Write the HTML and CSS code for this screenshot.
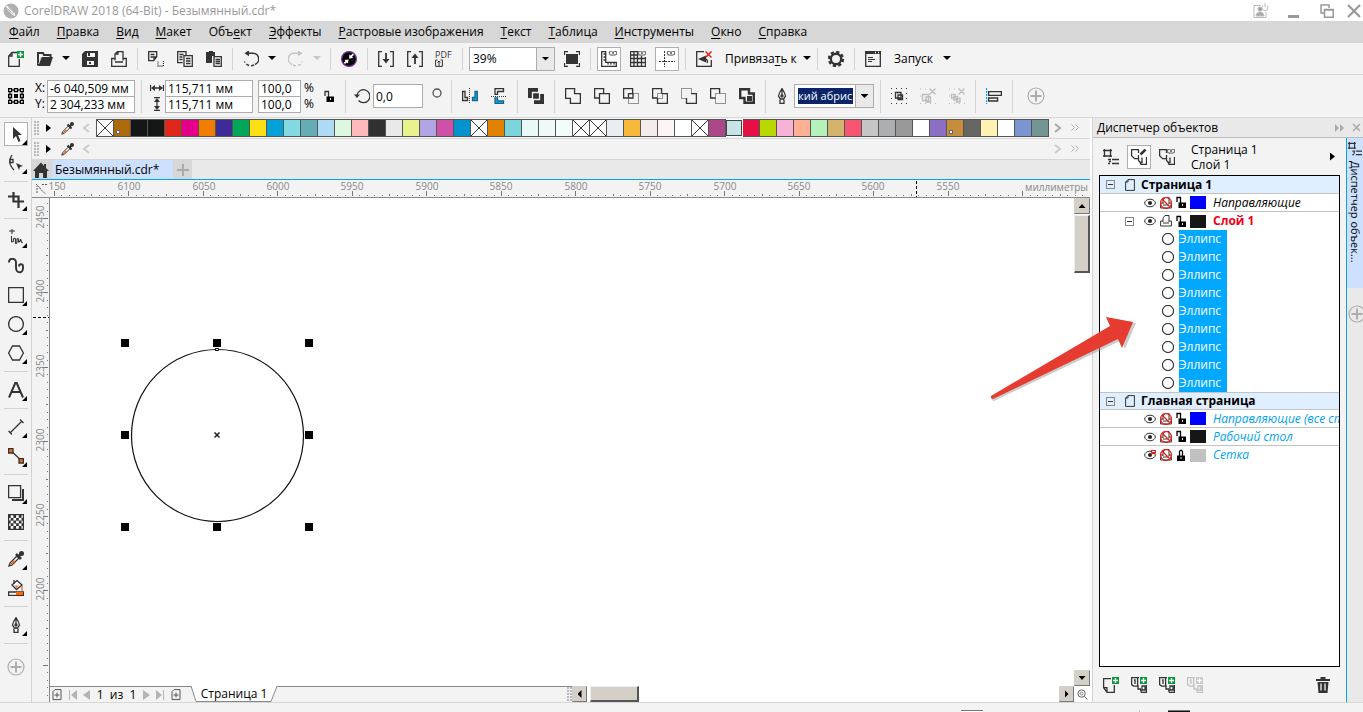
FILE: index.html
```
<!DOCTYPE html>
<html lang="ru">
<head>
<meta charset="utf-8">
<title>CorelDRAW 2018 (64-Bit) - Безымянный.cdr*</title>
<link rel="stylesheet" href="styles.css">
</head>
<body>
<svg class="defs" aria-hidden="true">
  <symbol id="new" viewBox="0 0 16 16"><path d="M9 1.500H4L.7 5v10.300h10.600V8M.7 5H4V1.500"/><path d="M9 0h7v7H9z" fill="#0a9a3c" stroke="none"/><path d="M12.500 1v5M10 3.500h5" stroke="#fff"/></symbol>
  <symbol id="open" viewBox="0 0 16 16"><path d="M1 14.500V2h5l1 2h6.500v2.500" stroke-width="2"/><path d="M1 15 4 6h12l-3 9z" fill="#333" stroke="none"/><path d="M1.500 13 4.500 6" stroke="#f3f3f3" stroke-width=".8"/></symbol>
  <symbol id="save" viewBox="0 0 16 16"><path d="M0 3 3 0h13v16H0z" fill="#333" stroke="none"/><path d="M5 2h8v4H5zM5 10h7v4H5z" fill="#f3f3f3" stroke="none"/><path d="M6 2h2v3H6zM7 11h2v2H7z" fill="#333" stroke="none"/></symbol>
  <symbol id="print" viewBox="0 0 16 16"><path d="M4 9.500V3l2.500-2.500H12v9M4 3h3V.5M4 7.500H.7v7.800h14.600V7.500H12M4 11h8"/></symbol>
  <symbol id="cut" viewBox="0 0 16 16"><path d="M.7.700h8v5l-3 4h-5zM2.500 3.500h4M2.500 6h3M6 9V6h3"/><path d="M10 10.500V15h5.500V9" stroke-dasharray="1 1"/></symbol>
  <symbol id="copy" viewBox="0 0 16 16"><path d="M9 4V.7H.7v11h5M2.500 3.500h4M2.500 6h3M2.500 8.500h3M7 4.700h8.300v10.600H7zM9 7.500h4.500M9 10h4.500M9 12.500h4.500"/></symbol>
  <symbol id="paste" viewBox="0 0 16 16"><path d="M0 1h3V0h4v1h2v4H6v7H0z" fill="#333" stroke="none"/><path d="M8 5.700h7.300v9.600H8zM9.500 8.500H14M9.500 10.500H14M9.500 12.500H14"/></symbol>
  <symbol id="undo" viewBox="0 0 16 16"><path d="M5 2.200h4.500a5.800 5.800 0 0 1 2.500 11.200" stroke-width="1.600"/><path d="M11 14a7 7 0 0 1-9.500-3.500" stroke-width="1.600" stroke-dasharray="3 2"/><path d="m1.500 2.200 4.500-3v6z" fill="#333" stroke="none"/></symbol>
  <symbol id="redo" viewBox="0 0 16 16"><path d="M11 2.200H6.500A5.800 5.800 0 0 0 4 13.400" stroke="#c4c4c4" stroke-width="1.600"/><path d="M5 14a7 7 0 0 0 9.500-3.500" stroke="#c4c4c4" stroke-width="1.600" stroke-dasharray="3 2"/><path d="m14.500 2.200-4.500-3v6z" fill="#c4c4c4" stroke="none"/></symbol>
  <symbol id="search" viewBox="0 0 16 16"><circle cx="8" cy="8" r="7.400" fill="#060606" stroke="#7c2da0" stroke-width="1.200"/><path d="m3.500 9 4-.5-.5 4-1.200-1L4 13l-1.200-1.200L4.500 10zM8.500 3.500l1.200 1 2-2L13 3.800l-2 2 1.200 1.200-4.200.5z" fill="#fff" stroke="none"/></symbol>
  <symbol id="import" viewBox="0 0 16 16"><path d="M4 .700H.7v14.600H4M12 .700h3.300v14.600H12"/><path d="M8 2v8" stroke-width="1.800"/><path d="m4.500 8 3.500 4.500L11.500 8z" fill="#333" stroke="none"/></symbol>
  <symbol id="export" viewBox="0 0 16 16"><path d="M4 .700H.7v14.600H4M12 .700h3.300v14.600H12"/><path d="M8 5v8" stroke-width="1.800"/><path d="m4.500 7 3.500-4.500L11.500 7z" fill="#333" stroke="none"/></symbol>
  <symbol id="pdfbox" viewBox="0 0 8 8"><path d="M2.500 1H.600v6.400h6.800V1H5.500M4 7V2M2.500 3.500 4 2l1.500 1.500" stroke-width="1"/></symbol>
  <symbol id="full" viewBox="0 0 16 16"><path d="M2 3h12v10H2z" fill="#333" stroke="none"/><path d="M.5 4V.5H4M12 .500h3.500V4M.500 12v3.500H4M12 15.500h3.500V12"/></symbol>
  <symbol id="eyes" viewBox="0 0 16 16"><ellipse cx="12" cy="2" rx="3.700" ry="2.200" stroke="#777"/><circle cx="12" cy="2" r="1" fill="#555" stroke="none"/></symbol>
  <symbol id="rulers" viewBox="0 0 16 16"><path d="M.7.700h4v10.600h10.600v4H.700zM2.500 3h2M2.500 6h2M2.500 9h2M7 11.500v2M10 11.500v2M13 11.500v2"/><use href="#eyes"/></symbol>
  <symbol id="grid" viewBox="0 0 16 16"><path d="M8 .500H.500v15h15V6M.500 4h8M.500 7.500h15M.500 11.500h15M4 .500v15M7.500.500v15M11.500 5v10.500"/><use href="#eyes"/></symbol>
  <symbol id="guides" viewBox="0 0 16 16"><path d="M5.500 0v16M0 10.500h16" stroke-width="1" stroke-dasharray="2 1"/><use href="#eyes"/></symbol>
  <symbol id="snap" viewBox="0 0 16 16"><path d="M8 .700H.7v14.600h14.600V9"/><path d="m2 8 8-3.500v7z" fill="#333" stroke="none"/><path d="M10 8a3 3 0 0 1 1 4"/><path d="m9.500.500 6 6M15.500.500l-6 6" stroke="#e2231a" stroke-width="1.500"/></symbol>
  <symbol id="gear" viewBox="0 0 16 16"><circle cx="8" cy="8" r="5.200" stroke-width="2.400"/><circle cx="8" cy="8" r="7.100" stroke-width="2.200" stroke-dasharray="3.200 2.370"/></symbol>
  <symbol id="launch" viewBox="0 0 16 16"><path d="M.7.700h14.600v14.600H.7z"/><path d="M0 0h16v3H0z" fill="#333" stroke="none"/><path d="M10 1.500h1M13 1.500h1" stroke="#fff"/><path d="M3 6.500h5M3 8.500h7M3 10.500h4" stroke-width="1"/></symbol>
  <symbol id="origin" viewBox="0 0 16 16"><path d="M2 2h12v12H2z"/><path d="M.6.600h3v3h-3zM6.500.600h3v3h-3zM12.400.600h3v3h-3zM.600 6.500h3v3h-3zM12.400 6.500h3v3h-3zM.600 12.400h3v3h-3zM6.500 12.400h3v3h-3zM12.400 12.400h3v3h-3z" fill="#f3f3f3" stroke="#000"/><path d="M6 6h4v4H6z" fill="#000" stroke="none"/></symbol>
  <symbol id="wide" viewBox="0 0 14 14"><path d="M.5 4v6M13.500 4v6M2 7h10" stroke="#333"/><path d="m1 7 4-3v6zM13 7 9 4v6z" fill="#333" stroke="none"/></symbol>
  <symbol id="unlock" viewBox="0 0 10 13"><path d="M1 6V1.500h3.500V7"/><path d="M2.500 6.500H10V12H2.500z" fill="#000" stroke="none"/><path d="M6.500 8v2" stroke="#ddd" stroke-width="1"/></symbol>
  <symbol id="lock" viewBox="0 0 10 13"><path d="M3.500 7V2.500Q5 0 6.500 2.500V7"/><path d="M1 6.500h8V12H1z" fill="#000" stroke="none"/><path d="M5 8v2" stroke="#ddd" stroke-width="1"/></symbol>
  <symbol id="rotate" viewBox="0 0 16 16"><path d="M3 7A6.500 6.500 0 1 1 4.500 12.500"/><path d="M0 6.500h6L3 10z" fill="#333" stroke="none"/></symbol>
  <symbol id="mirh" viewBox="0 0 16 16"><path d="M.6 3.500H3v6h2.500v3H.600z"/><path d="M15.400 3.500H13v6h-2.500v3h4.900z" fill="#1aa5ea" stroke="#17688e"/><path d="M7.500 0v16" stroke-width="1" stroke-dasharray="1 1"/></symbol>
  <symbol id="mirv" viewBox="0 0 16 16"><path d="M12.500.600H4v5.800h2.500V3.500h6z"/><path d="M4 9.800h2.500v3h6v2.700H4z" fill="#1aa5ea" stroke="#17688e"/><path d="M0 8.500h16" stroke-width="1" stroke-dasharray="1 1"/></symbol>
  <symbol id="order" viewBox="0 0 16 16"><path d="M0 0h10v10H0zM6 6h10v10H6z" fill="#333" stroke="none"/><path d="M4.500 4.500h7v7h-7z" fill="#333" stroke="#f3f3f3"/></symbol>
  <symbol id="weld" viewBox="0 0 16 16"><path d="M.6.600h9v5h5.800v9.800h-10v-5H.600z"/></symbol>
  <symbol id="trim" viewBox="0 0 16 16"><path d="M5.500 10H.600V.600h9v5M5.500 5.600h9.900v9.800H5.500z"/></symbol>
  <symbol id="intersect" viewBox="0 0 16 16"><path d="M5.500 10H.600V.600h9v5M5.500 5.600H10V10H5.500z"/><path d="M10.500 5.500h5v10h-10v-5" stroke-width="1" stroke-dasharray="1 1"/></symbol>
  <symbol id="simplify" viewBox="0 0 16 16"><path d="M5.500 10H.600V.600h9v5M10 5.600h5.400v9.800H5.500V10"/><path d="M5.500 5.500h5v5h-5z" stroke-width="1" stroke-dasharray="1 1"/></symbol>
  <symbol id="fmb" viewBox="0 0 16 16"><path d="M5.500 10.500h-5V.500h10v5" stroke-width="1" stroke-dasharray="1 1"/><path d="M10 5.600h5.400v9.800H5.500V10"/></symbol>
  <symbol id="bmf" viewBox="0 0 16 16"><path d="M5.500 10H.600V.600h9v5"/><path d="M5.500 5.500h10v10h-10z" stroke-width="1" stroke-dasharray="1 1"/></symbol>
  <symbol id="boundary" viewBox="0 0 16 16"><path d="M1.200 1.200H10v4.300h4.800v9.300H5.500V10H1.200z" stroke-width="2.400"/><path d="M8 8h5v5H8z" fill="#333" stroke="none"/></symbol>
  <symbol id="pen" viewBox="0 0 16 16"><path d="M8 .500Q5 5 4.500 8L6.500 11h3l2-3Q11 5 8 .500zM8 1v6M6 11.500v4h4v-4"/><circle cx="8" cy="8" r="1"/></symbol>
  <symbol id="group" viewBox="0 0 16 16"><path d="M0 .500h16M0 15.500h16M.500 5v6M15.500 5v6" stroke-width="1" stroke-dasharray="1 4"/><path d="M4.500 4.500H10V10H4.500zM7 7h4.500v4.500H7z"/></symbol>
  <symbol id="ungroup" viewBox="0 0 16 16"><g stroke="#bcbcbc"><path d="M0 1h8M0 8h2M0 15.500h16" stroke-width="1" stroke-dasharray="1 4"/><path d="M2.500 6.500h6v6h-6zM6 9h4.500v5H6zM9.500.500l6 6M15.500.500l-6 6"/></g></symbol>
  <symbol id="ungroupall" viewBox="0 0 16 16"><g stroke="#bcbcbc"><path d="M0 1h8M0 8h2M0 15.500h16" stroke-width="1" stroke-dasharray="1 4"/><path d="M2.500 6.500H6V10H2.500zM5 8.500h3.500V12H5zM7.500 10.500H11V14H7.500zM9.500.500l6 6M15.500.500l-6 6"/></g></symbol>
  <symbol id="align" viewBox="0 0 16 16"><path d="M.5 0v16" stroke="#00a2ff" stroke-dasharray="2 1"/><path d="M2.600 3.600h12.800v3.800H2.600zM2.600 10h9v3h-9z"/></symbol>
  <symbol id="plus" viewBox="0 0 18 18"><circle cx="9" cy="9" r="8" stroke="#adadad" stroke-width="1.200"/><path d="M9 3.500v11M3.500 9h11" stroke="#adadad" stroke-width="2"/></symbol>
  <symbol id="t-pick" viewBox="0 0 16 16"><path d="M5 1v12l3-3 2.500 6 2-1L10 9h4z" fill="#333" stroke="none"/></symbol>
  <symbol id="t-shape" viewBox="0 0 16 16"><path d="M4 0Q0 6 3 11 4 13 6 15"/><path d="M2 4.500h3v3H2z" fill="#fff"/><path d="m8 8 7 3-3 1-1 3z" fill="#333" stroke="none"/></symbol>
  <symbol id="t-crop" viewBox="0 0 16 16"><path d="M5.500 0v9.500H16M0 4.500h10.500V16" stroke-width="2.200"/></symbol>
  <symbol id="t-free" viewBox="0 0 16 16"><path d="M4-1v6M1 2h6M3.500 7v5q0 2 2 0v-2q2-2 2 1v3q1 1 1.500-1v-3q1.500-1 1.500 1v2q2 0 2-3l1 3 1 1" stroke-width="1.100"/></symbol>
  <symbol id="t-art" viewBox="0 0 16 16"><path d="M1 4.500c0-5 7-5 7 0v5c0 7 7 5.500 7 1V8.500c0-3-4-3-4 0" stroke-width="1.900"/></symbol>
  <symbol id="t-rect" viewBox="0 0 16 16"><path d="M.600.600h14.800v14.800H.600z"/></symbol>
  <symbol id="t-ell" viewBox="0 0 16 16"><circle cx="8" cy="8" r="7.400"/></symbol>
  <symbol id="t-poly" viewBox="0 0 16 16"><path d="M4.500 1h7L15.400 8l-3.900 7h-7L.600 8z"/></symbol>
  <symbol id="t-text" viewBox="0 0 16 16"><path d="M1 15.500 7.500.500h1L15 15.500M3.500 10h9" stroke-width="2"/></symbol>
  <symbol id="t-dim" viewBox="0 0 16 16"><path d="m2 14 12-12M.500 12l3.500 3.500M12 .500 15.500 4"/></symbol>
  <symbol id="t-conn" viewBox="0 0 16 16"><path d="m2 2 12 11"/><path d="M.6.600H5V5H.600zM11 10.600h4.400V15H11z" fill="#ff6a00"/></symbol>
  <symbol id="t-shadow" viewBox="0 0 16 16"><path d="M.600.600h12v12H.600z"/><path d="M4 15h11V4" stroke-width="2"/></symbol>
  <symbol id="t-trans" viewBox="0 0 16 16"><path d="M.600.600h14.800v14.800H.600z" fill="#fff"/><path d="M0 2.500h16M0 8h16M0 13.500h16" stroke-width="2.800" stroke-dasharray="2.700 2.700"/><path d="M2.700 5.300H16M2.700 10.700H16" stroke-width="2.700" stroke-dasharray="2.700 2.700"/></symbol>
  <symbol id="t-drop" viewBox="0 0 16 16"><path d="m1 15 1-3 7-7 2 2-7 7z" fill="#fff"/><path d="m2 14 1-2 3-3 1.500 1.500-3.500 3z" fill="#f36c21" stroke="none"/><path d="m8 3 5 5M10.500 5.500 14 2" stroke-width="2.500"/><circle cx="13.500" cy="2.500" r="2.500" fill="#333" stroke="none"/></symbol>
  <symbol id="t-fill" viewBox="0 0 16 16"><path d="m4 5 5-4.500L14 5 8.500 9.500z" fill="#fff"/><path d="M6.500 5.500h4.500L8.500 8z" fill="#f36c21" stroke="none"/><path d="M6 0v4"/><path d="M14 6v5" stroke="#f36c21"/><path d="M.600 12h14.800v3.400H.600z" fill="#fff"/><path d="M8 12h7v3H8z" fill="#ff6a00" stroke="none"/></symbol>
  <symbol id="home" viewBox="0 0 16 16"><path d="M8 .5 0 9h2v7h4v-5h4v5h4V9h2l-3-3V2h-2v2z" fill="#333" stroke="none"/></symbol>
  <symbol id="objm" viewBox="0 0 16 16"><path d="M1.500 0v8M7.500 0v8M0 1.500h9M0 7h9M9 10.500h7M9 14.500h7M5 10.500h3M6 12.500h2M5 14.500h2"/></symbol>
  <symbol id="layer" viewBox="0 0 16 16"><path d="M7.500 4V.600H.600v6l3 3h3.900V6M7.500 9.500v2l2 2h1.500V8.500M11.500 15.400h4V8M9 13.500l1 1.900h2"/></symbol>
  <symbol id="pencil" viewBox="0 0 16 16"><use href="#layer"/><path d="m9.500 5.500 5-5" stroke-width="2.500"/></symbol>
  <symbol id="layereye" viewBox="0 0 16 16"><use href="#layer"/><use href="#eyes"/></symbol>
  <symbol id="eye" viewBox="0 0 12 10"><ellipse cx="6" cy="5" rx="5.300" ry="3.800"/><circle cx="6" cy="5" r="2" fill="#222" stroke="none"/></symbol>
  <symbol id="eyeoff" viewBox="0 0 12 10"><ellipse cx="6" cy="5" rx="5.300" ry="3.800"/><circle cx="6" cy="5" r="2" fill="#222" stroke="none"/><circle cx="9.500" cy="1.500" r="2.700" fill="#e11" stroke="none"/><path d="M8 1.500h3" stroke="#fff"/></symbol>
  <symbol id="tprint" viewBox="0 0 12 12"><path d="M3 7V3l2-2.500h4V7M3 6H.600v5h10.800V6H9M3 8h6"/></symbol>
  <symbol id="noprint" viewBox="0 0 12 12"><use href="#tprint"/><circle cx="6" cy="6" r="5.500" stroke="#e2231a" stroke-width="1.300"/><path d="m2 2 8 8" stroke="#e2231a" stroke-width="1.300"/></symbol>
  <symbol id="page" viewBox="0 0 12 12"><path d="M4 .600h6.400v10.800H1.600V3zM1.600 3H4V.600"/></symbol>
  <symbol id="newlayer" viewBox="0 0 16 16"><path d="M8 1.600H.600v9l3.500 4.800h7.200V8M.600 10.600H4v4"/><path d="M9 0h7v7H9z" fill="#0a9a3c" stroke="none"/><path d="M12.500 1v5M10 3.500h5" stroke="#fff"/></symbol>
  <symbol id="master" viewBox="0 0 16 16"><path d="M8 .600H.600v7l2 1.500h4V.600M3 3h1v4M7 8v4h3M15.400 8v7.400h-5l-1-3M11 9h3v4h-3z"/><path d="M9 0h7v7H9z" fill="#0a9a3c" stroke="none"/><path d="M12.500 1v5M10 3.500h5" stroke="#fff"/></symbol>
  <symbol id="masteroff" viewBox="0 0 16 16"><g stroke="#c2c2c2"><path d="M8 .600H.600v7l2 1.500h4V.600M3 3h1v4M7 8v4h3M15.400 8v7.400h-5l-1-3M11 9h3v4h-3z"/><path d="M9 0h7v7H9z" fill="#c8c8c8" stroke="none"/><path d="M12.500 1v5M10 3.500h5" stroke="#fff"/></g></symbol>
  <symbol id="trash" viewBox="0 0 16 16"><path d="M1 2h4.500V0h5v2H15v2H1zM2.500 5h11l-1 11h-9z" fill="#333" stroke="none"/><path d="M6 6.500v7M10 6.500v7" stroke="#f3f3f3"/></symbol>
  <symbol id="addpage" viewBox="0 0 10 12"><path d="M3 .600h6v10H1v-8zM5 3.500v5M2.500 6h5" stroke="#555"/></symbol>
  <symbol id="zoomi" viewBox="0 0 12 12"><circle cx="5" cy="5" r="4" stroke="#555"/><circle cx="5" cy="5" r="1.500" stroke="#777"/><path d="m8 8 3.500 3.500" stroke="#555"/></symbol>
</svg>

<header class="titlebar">
  <svg class="logo" viewBox="0 0 16 16"><circle cx="8" cy="8" r="7.500" fill="#b0b0b0"/><path d="M3 2.500 6 4l6 6.500v2.500L9.500 12 4 6z" fill="#fff"/><path d="m4 5 6.500 6.500M5.500 4l6 6.500" stroke="#aaa" fill="none" stroke-width=".8"/></svg>
  <h1>CorelDRAW 2018 (64-Bit) - Безымянный.cdr*</h1>
  <div class="winbtns">
    <button aria-label="Войти"><svg width="17" height="16" viewBox="0 0 17 16" fill="none" stroke="#bbb"><path d="M9 2.500H2v12h12V9"/><circle cx="8" cy="6" r="2" fill="#999"/><path d="M4 13q0-3 3-4h2q3 1 3 4z" fill="#aaa"/><path d="M11 2.500a3 3 0 1 0 4 0M13 0v4"/></svg></button>
    <button aria-label="Свернуть"><svg width="12" height="16"><path d="M0 12h11v3H0z" fill="#999"/></svg></button>
    <button aria-label="Восстановить"><svg width="14" height="14" viewBox="0 0 14 14" fill="none" stroke="#999" stroke-width="1.500"><path d="M4 9H1V1h8v3M4.500 5.500h8.700v7.700H4.500zM4.500 6h9"/></svg></button>
    <button aria-label="Закрыть"><svg width="14" height="14" viewBox="0 0 14 14" stroke="#999" stroke-width="2.200"><path d="m1 1 12 12M13 1 1 13"/></svg></button>
  </div>
</header>

<nav class="menu">
  <a href="#"><u>Ф</u>айл</a><a href="#"><u>П</u>равка</a><a href="#"><u>В</u>ид</a><a href="#"><u>М</u>акет</a><a href="#">Объ<u>е</u>кт</a><a href="#"><u>Э</u>ффекты</a><a href="#"><u>Р</u>астровые изображения</a><a href="#"><u>Т</u>екст</a><a href="#"><u>Т</u>аблица</a><a href="#"><u>И</u>нструменты</a><a href="#"><u>О</u>кно</a><a href="#"><u>С</u>правка</a>
</nav>

<div class="bar standard" role="toolbar">
  <button class="tool" aria-label="Создать"><svg class="i"><use href="#new"/></svg></button>
  <button class="tool" aria-label="Открыть"><svg class="i"><use href="#open"/></svg></button>
  <button class="caret" aria-label="Недавние"></button>
  <button class="tool" aria-label="Сохранить"><svg class="i"><use href="#save"/></svg></button>
  <button class="tool" aria-label="Печать"><svg class="i"><use href="#print"/></svg></button>
  <i class="sep"></i>
  <button class="tool" aria-label="Вырезать"><svg class="i"><use href="#cut"/></svg></button>
  <button class="tool" aria-label="Копировать"><svg class="i"><use href="#copy"/></svg></button>
  <button class="tool" aria-label="Вставить"><svg class="i"><use href="#paste"/></svg></button>
  <i class="sep"></i>
  <button class="tool" aria-label="Отменить"><svg class="i"><use href="#undo"/></svg></button>
  <button class="caret" aria-label="Список отмен"></button>
  <button class="tool" aria-label="Повторить"><svg class="i"><use href="#redo"/></svg></button>
  <button class="caret off" aria-label="Список повторов"></button>
  <i class="sep"></i>
  <button class="tool" aria-label="Поиск содержимого"><svg class="i"><use href="#search"/></svg></button>
  <i class="sep"></i>
  <button class="tool" aria-label="Импорт"><svg class="i"><use href="#import"/></svg></button>
  <button class="tool" aria-label="Экспорт"><svg class="i"><use href="#export"/></svg></button>
  <button class="tool pdf"><span>PDF</span><svg class="i"><use href="#pdfbox"/></svg></button>
  <i class="sep"></i>
  <div class="combo zoom"><input aria-label="Масштаб" value="39%"><button aria-label="Выбор масштаба"></button></div>
  <button class="tool" aria-label="Во весь экран"><svg class="i"><use href="#full"/></svg></button>
  <i class="sep"></i>
  <button class="tool on" aria-label="Линейки"><svg class="i"><use href="#rulers"/></svg></button>
  <button class="tool" aria-label="Сетка"><svg class="i"><use href="#grid"/></svg></button>
  <button class="tool on" aria-label="Направляющие"><svg class="i"><use href="#guides"/></svg></button>
  <i class="sep"></i>
  <button class="tool" aria-label="Отключить привязку"><svg class="i"><use href="#snap"/></svg></button>
  <button class="textbtn"><span>Привяза<u>т</u>ь к</span><i class="caret"></i></button>
  <i class="sep"></i>
  <button class="tool" aria-label="Параметры"><svg class="i"><use href="#gear"/></svg></button>
  <i class="sep"></i>
  <button class="tool" aria-label="Приложения"><svg class="i"><use href="#launch"/></svg></button>
  <button class="textbtn short"><span>Запуск</span><i class="caret"></i></button>
</div>

<div class="bar property" role="toolbar">
  <button class="tool" aria-label="Исходная точка"><svg class="i"><use href="#origin"/></svg></button>
  <div class="pair">
    <label for="px">X:</label><input id="px" value="-6 040,509 мм">
    <label for="py">Y:</label><input id="py" value="2 304,233 мм">
  </div>
  <i class="sep"></i>
  <div class="pair size">
    <label for="pw" aria-label="Ширина"><svg class="mini"><use href="#wide"/></svg></label><input id="pw" value="115,711 мм">
    <label for="ph" aria-label="Высота"><svg class="mini turn"><use href="#wide"/></svg></label><input id="ph" value="115,711 мм">
  </div>
  <div class="pair scale">
    <input id="sx" value="100,0"><label for="sx">%</label>
    <input id="sy" value="100,0"><label for="sy">%</label>
  </div>
  <button class="tool lockbtn" aria-label="Сохранять пропорции"><svg class="lk"><use href="#unlock"/></svg></button>
  <i class="sep"></i>
  <div class="angle"><label for="rot" aria-label="Угол"><svg class="i"><use href="#rotate"/></svg></label><input id="rot" value="0,0"></div>
  <svg class="degree" viewBox="0 0 17 24"><circle cx="9" cy="9" r="4" fill="none" stroke="#555" stroke-width="1.300"/></svg>
  <i class="sep"></i>
  <button class="tool" aria-label="Отразить по горизонтали"><svg class="i"><use href="#mirh"/></svg></button>
  <button class="tool" aria-label="Отразить по вертикали"><svg class="i"><use href="#mirv"/></svg></button>
  <i class="sep"></i>
  <button class="tool" aria-label="Порядок"><svg class="i"><use href="#order"/></svg></button>
  <i class="sep"></i>
  <button class="tool" aria-label="Объединение"><svg class="i"><use href="#weld"/></svg></button>
  <button class="tool" aria-label="Исключение"><svg class="i"><use href="#trim"/></svg></button>
  <button class="tool" aria-label="Пересечение"><svg class="i"><use href="#intersect"/></svg></button>
  <button class="tool" aria-label="Упрощение"><svg class="i"><use href="#simplify"/></svg></button>
  <button class="tool" aria-label="Передние минус задние"><svg class="i"><use href="#fmb"/></svg></button>
  <button class="tool" aria-label="Задние минус передние"><svg class="i"><use href="#bmf"/></svg></button>
  <button class="tool" aria-label="Граница"><svg class="i"><use href="#boundary"/></svg></button>
  <i class="sep"></i>
  <div class="outline"><label for="ow" aria-label="Ширина абриса"><svg class="i"><use href="#pen"/></svg></label>
    <div class="combo"><input id="ow" class="marked" value="кий абрис"><button aria-label="Выбор абриса"></button></div></div>
  <i class="sep"></i>
  <button class="tool" aria-label="Сгруппировать"><svg class="i"><use href="#group"/></svg></button>
  <button class="tool" aria-label="Разгруппировать"><svg class="i"><use href="#ungroup"/></svg></button>
  <button class="tool" aria-label="Разгруппировать все"><svg class="i"><use href="#ungroupall"/></svg></button>
  <i class="sep"></i>
  <button class="tool" aria-label="Выровнять"><svg class="i"><use href="#align"/></svg></button>
  <i class="sep"></i>
  <button class="tool add" aria-label="Настроить"><svg class="p"><use href="#plus"/></svg></button>
</div>

<div class="work">
  <div class="toolbox" role="toolbar">
    <button class="tool on fly" aria-label="Выбор"><svg class="i"><use href="#t-pick"/></svg></button>
    <button class="tool fly" aria-label="Форма"><svg class="i"><use href="#t-shape"/></svg></button>
    <i class="sep"></i>
    <button class="tool fly" aria-label="Обрезка"><svg class="i"><use href="#t-crop"/></svg></button>
    <i class="sep"></i>
    <button class="tool fly" aria-label="Свободная форма"><svg class="i"><use href="#t-free"/></svg></button>
    <button class="tool" aria-label="Художественное оформление"><svg class="i"><use href="#t-art"/></svg></button>
    <button class="tool fly" aria-label="Прямоугольник"><svg class="i"><use href="#t-rect"/></svg></button>
    <button class="tool fly" aria-label="Эллипс"><svg class="i"><use href="#t-ell"/></svg></button>
    <button class="tool fly" aria-label="Многоугольник"><svg class="i"><use href="#t-poly"/></svg></button>
    <i class="sep"></i>
    <button class="tool fly" aria-label="Текст"><svg class="i"><use href="#t-text"/></svg></button>
    <i class="sep"></i>
    <button class="tool fly" aria-label="Размер"><svg class="i"><use href="#t-dim"/></svg></button>
    <button class="tool fly" aria-label="Соединитель"><svg class="i"><use href="#t-conn"/></svg></button>
    <i class="sep"></i>
    <button class="tool fly" aria-label="Тень"><svg class="i"><use href="#t-shadow"/></svg></button>
    <button class="tool" aria-label="Прозрачность"><svg class="i"><use href="#t-trans"/></svg></button>
    <i class="sep"></i>
    <button class="tool fly" aria-label="Пипетка"><svg class="i"><use href="#t-drop"/></svg></button>
    <button class="tool" aria-label="Заливка"><svg class="i"><use href="#t-fill"/></svg></button>
    <i class="sep"></i>
    <button class="tool fly" aria-label="Перо абриса"><svg class="i"><use href="#pen"/></svg></button>
    <i class="sep"></i>
    <button class="tool add" aria-label="Настроить"><svg class="p"><use href="#plus"/></svg></button>
  </div>

  <main class="doc">
    <div class="palette">
      <i class="grip"></i><button class="play" aria-label="Меню палитры"></button>
      <button class="drop" aria-label="Пипетка"><svg><use href="#t-drop"/></svg></button>
      <button class="chev" aria-label="Назад"><svg viewBox="0 0 8 10"><path d="M7 1 2 5l5 4"/></svg></button>
      <div class="swatches">
        <button class="none"></button><button class="mark" style="background-color:#ad6a0b"></button><button style="background:#141716"></button><button style="background:#141716"></button><button style="background:#e0271b"></button><button style="background:#e4008a"></button><button style="background:#f07d00"></button><button style="background:#3e2c96"></button><button style="background:#00a65a"></button><button style="background:#ffe014"></button><button style="background:#00a2d8"></button><button style="background:#83d9df"></button><button style="background:#63aeb6"></button><button style="background:#addbf3"></button><button style="background:#dcf8df"></button><button style="background:#ffb8bc"></button><button style="background:#303030"></button><button style="background:#e9e9e9"></button><button style="background:#eaf28b"></button><button style="background:#b0a5e2"></button><button style="background:#cf50a9"></button><button style="background:#0093cd"></button><button class="none"></button><button style="background:#e38200"></button><button style="background:#7ad6da"></button><button style="background:#e8f9f8"></button><button style="background:#eef9fb"></button><button style="background:#f2fcfa"></button><button class="none"></button><button class="none"></button><button style="background:#e9eef3"></button><button style="background:#f8b93a"></button><button style="background:#f5ebea"></button><button style="background:#fff3f3"></button><button style="background:#ffffff"></button><button class="none"></button><button style="background:#ac4789"></button><button class="picked" style="background:#c6e3e7"></button><button style="background:#e51144"></button><button style="background:#b9d800"></button><button style="background:#f6b3d5"></button><button style="background:#ffb092"></button><button style="background:#b5f2bb"></button><button style="background:#d4b46d"></button><button style="background:#f75673"></button><button style="background:#c4c5c4"></button><button style="background:#adaeb0"></button><button style="background:#999999"></button><button style="background:#ffffff"></button><button style="background:#8b6fc5"></button><button class="mark" style="background-color:#c68d3c"></button><button style="background:#666663"></button><button style="background:#fff2b4"></button><button style="background:#ffffff"></button><button style="background:#7b94d2"></button><button style="background:#739694"></button>
      </div>
      <button class="chev next dark" aria-label="Далее"><svg viewBox="0 0 8 10"><path d="m1 1 5 4-5 4"/></svg></button>
      <button class="more" aria-label="Развернуть"><svg viewBox="0 0 8 8"><path d="m.500.500 3 3-3 3M4.500.500l3 3-3 3"/></svg></button>
    </div>
    <div class="palette">
      <i class="grip"></i><button class="play" aria-label="Меню палитры"></button>
      <button class="drop" aria-label="Пипетка"><svg><use href="#t-drop"/></svg></button>
      <button class="chev" aria-label="Назад"><svg viewBox="0 0 8 10"><path d="M7 1 2 5l5 4"/></svg></button>
      <div class="fill"></div>
      <button class="chev next" aria-label="Далее"><svg viewBox="0 0 8 10"><path d="m1 1 5 4-5 4"/></svg></button>
      <button class="more" aria-label="Развернуть"><svg viewBox="0 0 8 8"><path d="m.500.500 3 3-3 3M4.500.500l3 3-3 3"/></svg></button>
    </div>
    <div class="tabs">
      <button class="home" aria-label="Начало"><svg><use href="#home"/></svg></button>
      <button class="tab">Безымянный.cdr*</button>
      <button class="newtab" aria-label="Новая вкладка"><svg viewBox="0 0 12 12"><path d="M6 0v12M0 6h12"/></svg></button>
    </div>
    <div class="rulerx">
      <svg>
        <defs>
          <pattern id="tx" x="22" y="0" width="149" height="17" patternUnits="userSpaceOnUse">
            <path d="M0 11h1v5H0zM74 11h1v5h-1zM37 14h1v2h-1zM112 14h1v2h-1zM7 15h1v1H7zM15 15h1v1h-1zM22 15h1v1h-1zM30 15h1v1h-1zM45 15h1v1h-1zM52 15h1v1h-1zM60 15h1v1h-1zM67 15h1v1h-1zM82 15h1v1h-1zM89 15h1v1h-1zM97 15h1v1h-1zM104 15h1v1h-1zM119 15h1v1h-1zM127 15h1v1h-1zM134 15h1v1h-1zM142 15h1v1h-1z" fill="#777"/>
          </pattern>
        </defs>
        <rect x="18" width="100%" height="17" fill="url(#tx)"/>
        <path d="M4 4l5 5M5 13V6M10 4.500h5M7.500 8l6 6" stroke="#555" fill="none" stroke-dasharray="2 1"/>
        <g class="nums"><text x="25" y="10">150</text><text x="97" y="10">6100</text><text x="172" y="10">6050</text><text x="246" y="10">6000</text><text x="320" y="10">5950</text><text x="395" y="10">5900</text><text x="469" y="10">5850</text><text x="544" y="10">5800</text><text x="618" y="10">5750</text><text x="693" y="10">5700</text><text x="767" y="10">5650</text><text x="841" y="10">5600</text><text x="916" y="10">5550</text></g>
        <path d="M884.500 1v16" stroke="#000" stroke-dasharray="3 2"/>
      </svg>
      <span class="unit">миллиметры</span>
    </div>
    <div class="stage">
      <svg class="rulery">
        <defs>
          <pattern id="ty" x="0" y="20" width="17" height="149" patternUnits="userSpaceOnUse">
            <path d="M11 0v1h5V0zM11 74v1h5v-1zM14 37v1h2v-1zM14 112v1h2v-1zM15 7v1h1V7zM15 15v1h1v-1zM15 22v1h1v-1zM15 30v1h1v-1zM15 45v1h1v-1zM15 52v1h1v-1zM15 60v1h1v-1zM15 67v1h1v-1zM15 82v1h1v-1zM15 89v1h1v-1zM15 97v1h1v-1zM15 104v1h1v-1zM15 119v1h1v-1zM15 127v1h1v-1zM15 134v1h1v-1zM15 142v1h1v-1z" fill="#777"/>
          </pattern>
        </defs>
        <rect width="17" height="100%" fill="url(#ty)"/>
        <g class="nums"><text transform="translate(12 19) rotate(-90)">2450</text><text transform="translate(12 93) rotate(-90)">2400</text><text transform="translate(12 168) rotate(-90)">2350</text><text transform="translate(12 242) rotate(-90)">2300</text><text transform="translate(12 317) rotate(-90)">2250</text><text transform="translate(12 391) rotate(-90)">2200</text></g>
        <path d="M1 119.500h16" stroke="#000" stroke-dasharray="3 2"/>
      </svg>
      <div class="view">
        <div class="sheetrow">
          <svg class="canvas">
            <circle cx="167.500" cy="237.500" r="86" fill="none" stroke="#111" stroke-width="1.200"/>
            <path d="M71 141h8v8h-8zM163 141h8v8h-8zM255 141h8v8h-8zM71 233h8v8h-8zM255 233h8v8h-8zM71 325h8v8h-8zM163 325h8v8h-8zM255 325h8v8h-8z"/>
            <path d="M165.500 150.500h3v2h-3z" fill="#fff" stroke="#000"/>
            <path d="m164.500 234.500 5 5M169.500 234.500l-5 5" stroke="#222" stroke-width="1.500"/>
          </svg>
          <div class="vscroll"><button class="sb up" aria-label="Вверх"></button><div class="thumb"></div><button class="sb down" aria-label="Вниз"></button></div>
        </div>
        <div class="pages">
          <div class="pagenav">
            <button aria-label="Добавить страницу"><svg class="ap"><use href="#addpage"/></svg></button>
            <button aria-label="Первая"><svg width="10" height="10"><path d="M1 0h1v10H1zM9 0v10L3 5z"/></svg></button>
            <button aria-label="Предыдущая"><svg width="8" height="10"><path d="M7 0v10L0 5z"/></svg></button>
            <span>1&nbsp; из&nbsp; 1</span>
            <button aria-label="Следующая"><svg width="8" height="10"><path d="M1 0v10l7-5z"/></svg></button>
            <button aria-label="Последняя"><svg width="10" height="10"><path d="M1 0v10l6-5zM8 0h1v10H8z"/></svg></button>
            <button aria-label="Добавить страницу"><svg class="ap"><use href="#addpage"/></svg></button>
          </div>
          <button class="pagetab"><svg viewBox="0 0 86 16"><path d="M0 0h86l-6 15.500H5z" fill="#fff"/><path d="M0 0l5 15.500h75L86 0" fill="none" stroke="#888"/></svg><span>Страница 1</span></button>
          <div class="rest"><i class="grip"></i></div>
          <div class="hscroll"><button class="sb left" aria-label="Влево"></button><div class="thumb"></div><button class="sb right" aria-label="Вправо"></button></div>
          <button class="navi" aria-label="Навигатор"><svg><use href="#zoomi"/></svg></button>
        </div>
      </div>
    </div>
  </main>

  <aside class="docker">
    <div class="dockhead"><h2>Диспетчер объектов</h2>
      <button aria-label="Свернуть"><svg width="9" height="8"><path d="M0 0v8l4-4zM5 0v8l4-4z" fill="#aaa"/></svg></button>
      <button aria-label="Закрыть"><svg width="9" height="9" stroke="#aaa" stroke-width="1.500"><path d="m1 1 7 7M8 1 1 8"/></svg></button>
    </div>
    <div class="dockbody">
      <div class="panel">
        <div class="paneltools">
          <button class="tool" aria-label="Свойства объекта"><svg class="i"><use href="#objm"/></svg></button>
          <button class="tool on" aria-label="Редактировать по слоям"><svg class="i"><use href="#pencil"/></svg></button>
          <button class="tool" aria-label="Вид диспетчера слоев"><svg class="i"><use href="#layereye"/></svg></button>
          <p>Страница 1<br>Слой 1</p>
          <button class="play" aria-label="Параметры"></button>
        </div>
        <ul class="tree">
          <li class="pg"><button class="exp" aria-label="Свернуть"></button><svg class="s"><use href="#page"/></svg>Страница 1</li>
          <li class="ly line"><svg class="e"><use href="#eye"/></svg><svg class="s"><use href="#noprint"/></svg><svg class="l"><use href="#unlock"/></svg><i class="sw blue"></i><em>Направляющие</em></li>
          <li class="ly kids"><button class="exp" aria-label="Свернуть"></button><svg class="e"><use href="#eye"/></svg><svg class="s"><use href="#tprint"/></svg><svg class="l"><use href="#unlock"/></svg><i class="sw black"></i><b>Слой 1</b></li>
          <li class="ob"><svg class="c"><use href="#t-ell"/></svg><span>Эллипс</span></li>
          <li class="ob"><svg class="c"><use href="#t-ell"/></svg><span>Эллипс</span></li>
          <li class="ob"><svg class="c"><use href="#t-ell"/></svg><span>Эллипс</span></li>
          <li class="ob"><svg class="c"><use href="#t-ell"/></svg><span>Эллипс</span></li>
          <li class="ob"><svg class="c"><use href="#t-ell"/></svg><span>Эллипс</span></li>
          <li class="ob"><svg class="c"><use href="#t-ell"/></svg><span>Эллипс</span></li>
          <li class="ob"><svg class="c"><use href="#t-ell"/></svg><span>Эллипс</span></li>
          <li class="ob"><svg class="c"><use href="#t-ell"/></svg><span>Эллипс</span></li>
          <li class="ob"><svg class="c"><use href="#t-ell"/></svg><span>Эллипс</span></li>
          <li class="pg second"><button class="exp" aria-label="Свернуть"></button><svg class="s"><use href="#page"/></svg>Главная страница</li>
          <li class="ly line sky"><svg class="e"><use href="#eye"/></svg><svg class="s"><use href="#noprint"/></svg><svg class="l"><use href="#unlock"/></svg><i class="sw blue"></i><em>Направляющие (все ст</em></li>
          <li class="ly line sky"><svg class="e"><use href="#eye"/></svg><svg class="s"><use href="#noprint"/></svg><svg class="l"><use href="#unlock"/></svg><i class="sw black"></i><em>Рабочий стол</em></li>
          <li class="ly sky"><svg class="e"><use href="#eyeoff"/></svg><svg class="s"><use href="#noprint"/></svg><svg class="l"><use href="#lock"/></svg><i class="sw gray"></i><em>Сетка</em></li>
        </ul>
        <div class="panelfoot">
          <button class="tool" aria-label="Новый слой"><svg class="i"><use href="#newlayer"/></svg></button>
          <button class="tool" aria-label="Новый главный слой (все)"><svg class="i"><use href="#master"/></svg></button>
          <button class="tool" aria-label="Новый главный слой (нечетные)"><svg class="i"><use href="#master"/></svg></button>
          <button class="tool" aria-label="Новый главный слой (четные)" disabled><svg class="i"><use href="#masteroff"/></svg></button>
          <button class="tool trash" aria-label="Удалить"><svg class="i"><use href="#trash"/></svg></button>
        </div>
      </div>
      <div class="strip">
        <button class="sidetab"><svg class="i"><use href="#objm"/></svg><span>Диспетчер объек...</span></button>
        <button class="tool add" aria-label="Добавить"><svg class="p"><use href="#plus"/></svg></button>
      </div>
    </div>
    <svg class="arrow" viewBox="0 0 150 92"><path d="M2 83 124 12 119 3l27 5-11 26-3-9L4 86q-3 0-2-3z" fill="#999" opacity=".5"/><path d="M1 81 120 11l-4-9 27 5-11 26-4-9L3 84q-3 0-2-3z" fill="#e53b30"/></svg>
  </aside>
</div>
<footer class="status"><i class="chip"></i><i class="rule"></i><i class="chip ink"></i></footer>
</body>
</html>
```
FILE: styles.css
```
* { box-sizing: border-box; }
html, body { height: 100%; }
body {
  margin: 0;
  display: flex;
  flex-direction: column;
  overflow: hidden;
  background: #f3f3f3;
  color: #000;
  font: 12px/16px "Open Sans", "Noto Sans", sans-serif;
}
button { border: 0; padding: 0; margin: 0; background: none; font: inherit; color: inherit; }
input { border: 0; padding: 0; margin: 0; font: inherit; color: #000; min-width: 0; border-radius: 0; outline: 0; }
button svg { display: block; }
h1, h2, p { margin: 0; font: inherit; }
u { text-underline-offset: 2px; }
.defs { display: none; }
.i, .mini, .lk, .s, .e, .l, .c, .drop svg, .home svg, .ap, .navi svg, .p { fill: none; stroke: #333; stroke-width: 1.3; flex: none; overflow: visible; }
.i { width: 16px; height: 16px; }
.p { width: 18px; height: 18px; }

.titlebar { flex: none; height: 21px; display: flex; align-items: center; gap: 5px; padding: 0 2px 0 3px; background: #fff; color: #999; }
.logo { width: 16px; height: 16px; }
.titlebar h1 { flex: 1; }
.winbtns { display: flex; align-items: center; }
.winbtns button:nth-child(1) { margin-right: 19px; }
.winbtns button:nth-child(2) { margin-right: 20px; }
.winbtns button:nth-child(3) { margin-right: 13px; }

.menu { flex: none; height: 22px; display: flex; align-items: center; gap: 17px; padding-left: 9px; background: #d7d7d7; white-space: nowrap; }
.menu a { color: #000; text-decoration: none; }

.bar { flex: none; display: flex; align-items: center; gap: 5px; padding-left: 4px; border-bottom: 1px solid #d7d7d7; }
.standard { height: 32px; }
.property { height: 43px; }
.tool { flex: none; width: 24px; height: 24px; display: flex; align-items: center; justify-content: center; border: 1px solid transparent; position: relative; }
.tool.on { background: #fff; border-color: #b0b0b0; }
.sep { flex: none; width: 3px; height: 22px; border-left: 1px solid transparent; border-right: 1px solid transparent; background: #d2d2d2 content-box; }
.property .sep { height: 33px; }
.caret { flex: none; width: 11px; height: 5px; background: #000; clip-path: polygon(0 0, 8px 0, 4px 4px); }
.caret.off { background: #c8c8c8; }
.pdf { flex-direction: column; align-items: flex-start; font: 9px/8px "Open Sans", sans-serif; color: #333; padding-left: 2px; }
.pdf .i { height: 8px; width: 8px; }
.textbtn { flex: none; width: 90px; padding-left: 4px; display: flex; align-items: center; justify-content: space-between; white-space: nowrap; }
.textbtn .caret { width: 8px; }
.textbtn.short { width: 61px; }
.combo { display: flex; width: 80px; height: 24px; border: 1px solid #acacac; background: #fff; padding: 3px 0 3px 3px; }
.combo.zoom { width: 86px; }
.combo input { flex: 1; background: #fff; }
.combo .marked { background: #0b246a; color: #fff; font-size: 11px; margin-right: 2px; }
.combo button { width: 18px; margin: -3px 0; border-left: 1px solid #acacac; background: #e9e9e9; position: relative; }
.combo button::after { content: ""; display: block; margin: auto; width: 8px; height: 4px; background: #000; clip-path: polygon(0 0, 100% 0, 50% 100%); }

.pair { flex: none; display: grid; grid-template-columns: 14px 88px; grid-auto-rows: 16px; align-items: center; }
.pair.size { grid-template-columns: 17px 88px; }
.pair.scale { grid-template-columns: 43px 9px; }
.pair label { padding-left: 2px; }
.pair.scale label { padding-left: 3px; }
.pair input { height: 17px; border: 1px solid #acacac; background: #fff; padding-left: 2px; width: 100%; }
.mini { width: 14px; height: 14px; display: block; }
.turn { transform: rotate(90deg); }
.lk { width: 10px; height: 13px; }
.lockbtn { padding-left: 3px; }
.angle { flex: none; display: flex; align-items: center; width: 71px; }
.angle label { width: 21px; padding-left: 2px; }
.angle .i, .outline .i { display: block; }
.angle input { width: 50px; height: 24px; border: 1px solid #acacac; padding-left: 2px; }
.degree { flex: none; width: 17px; height: 24px; }
.outline { flex: none; display: flex; align-items: center; width: 102px; }
.outline label { width: 22px; padding-left: 2px; }
.property .add { margin-left: 5px; }

.work { flex: 1; min-height: 0; display: flex; }
.toolbox { flex: none; width: 32px; border-right: 1px solid #d2d2d2; padding: 4px 0 0 4px; display: flex; flex-direction: column; gap: 5px; }
.toolbox .sep { width: 24px; height: 3px; border: 0; border-top: 1px solid transparent; border-bottom: 1px solid transparent; }
.toolbox .add { margin-top: 5px; }
.fly::after { content: ""; position: absolute; right: 0; bottom: 0; width: 5px; height: 5px; background: #000; clip-path: polygon(100% 0, 100% 100%, 0 100%); }

.doc { flex: 1; min-width: 0; display: flex; flex-direction: column; border-right: 2px solid #fff; }
.palette { flex: none; height: 21px; border-bottom: 1px solid #d7d7d7; display: flex; align-items: center; padding-left: 2px; }
.grip { flex: none; width: 5px; height: 15px; background: radial-gradient(circle at 1px 1px, #b8b8b8 1px, transparent 1px) 0 0 / 3px 3px; }
.play { flex: none; width: 5px; height: 8px; background: #000; clip-path: polygon(0 0, 100% 50%, 0 100%); }
.palette .play { margin: 0 10px 0 7px; }
.drop svg { width: 13px; height: 13px; stroke-width: 1.2; }
.chev { margin-left: 8px; }
.chev svg { width: 8px; height: 10px; fill: none; stroke: #ccc; stroke-width: 2; }
.chev.dark svg { stroke: #aaa; }
.chev.next { margin-left: 4px; }
.more { margin: 0 11px 0 9px; }
.more svg { width: 8px; height: 8px; fill: none; stroke: #aaa; }
.fill { flex: 1; }
.swatches { flex: 1; min-width: 0; display: flex; height: 18px; margin-left: 6px; border-left: 1px solid #555; }
.swatches button { flex: 1 1 17px; max-width: 17px; border: 1px solid #555; border-left: 0; }
.swatches .none { background: linear-gradient(45deg, transparent 48%, #333 48%, #333 52%, transparent 52%), linear-gradient(-45deg, transparent 48%, #333 48%, #333 52%, transparent 52%), #fff; }
.swatches .picked { border: 1px solid #fff; border-left: 0; box-shadow: inset 0 0 0 1px #444; }
.swatches .mark { background-image: linear-gradient(#fff, #fff), linear-gradient(#666, #666); background-size: 2px 2px, 4px 4px; background-position: 3px 11px, 2px 10px; background-repeat: no-repeat; }

.tabs { flex: none; height: 20px; border-bottom: 1px solid #00a4f4; display: flex; background: #e9e9e9; }
.home { width: 20px; background: #d7d7d7; padding-left: 1px; }
.home svg { width: 16px; height: 16px; }
.tab { width: 121px; background: #cde1ff; text-align: left; padding-left: 3px; white-space: nowrap; }
.newtab { width: 19px; background: #d7d7d7; }
.newtab svg { width: 12px; height: 12px; margin: auto; stroke: #aaa; stroke-width: 2; }

.rulerx { flex: none; height: 18px; border-bottom: 1px solid #888; position: relative; }
.rulerx svg { display: block; width: 100%; height: 17px; }
.unit { position: absolute; right: 2px; top: 1px; color: #888; font-size: 10px; line-height: 12px; }
.nums { font-size: 10px; fill: #888; text-anchor: middle; }
.stage { flex: 1; min-height: 0; display: flex; }
.rulery { flex: none; width: 17px; height: 100%; }
.view { flex: 1; min-width: 0; display: flex; flex-direction: column; border-left: 1px solid #888; }
.sheetrow { flex: 1; min-height: 0; display: flex; background: #fff; }
.canvas { flex: 1; min-width: 0; height: 100%; }
.vscroll { flex: none; width: 16px; display: flex; flex-direction: column; }
.sb { flex: none; width: 15px; height: 16px; background: #d4d0c8; border: 1px solid #d4d0c8; border-right-color: #777; border-bottom-color: #777; display: grid; place-items: center; }
.vscroll .sb { width: 16px; }
.vscroll .thumb { height: 58px; margin: 1px 0 auto; }
.thumb { background: #d4d0c8; border: 1px solid #eee; border-right: 2px solid #555; border-bottom: 2px solid #555; }
.sb::after { content: ""; width: 7px; height: 4px; background: #000; clip-path: polygon(50% 0, 100% 100%, 0 100%); }
.down::after { clip-path: polygon(0 0, 100% 0, 50% 100%); }
.left::after { width: 4px; height: 8px; clip-path: polygon(0 50%, 100% 0, 100% 100%); }
.right::after { width: 4px; height: 8px; clip-path: polygon(0 0, 100% 50%, 0 100%); }
.pages { flex: none; height: 16px; display: flex; }
.pagenav { flex: none; width: 141px; border-top: 1px solid #888; display: flex; align-items: center; justify-content: space-between; padding: 0 10px 0 2px; white-space: nowrap; }
.pagenav button svg { fill: #b4b4b4; }
.pagenav .ap { width: 10px; height: 12px; fill: none; stroke-width: 1; }
.pagetab { flex: none; width: 86px; position: relative; }
.pagetab svg { width: 86px; height: 16px; }
.pagetab span { position: absolute; inset: 0; text-align: center; white-space: nowrap; }
.rest { flex: none; width: 295px; border-top: 1px solid #888; display: flex; justify-content: flex-end; }
.hscroll { flex: 1; display: flex; background: #fff; }
.hscroll .thumb { width: 49px; margin: 0 auto 0 3px; }
.navi { width: 16px; background: #fff; padding-left: 3px; }
.navi svg { width: 11px; height: 11px; stroke-width: 1; }

.docker { flex: none; width: 271px; border-left: 1px solid #d2d2d2; display: flex; flex-direction: column; position: relative; }
.dockhead { height: 20px; border-bottom: 1px solid #bbb; background: #e9e9e9; display: flex; align-items: center; gap: 8px; padding: 0 2px 0 4px; }
.dockhead h2 { flex: 1; }
.dockbody { flex: 1; min-height: 0; display: flex; }
.panel { flex: 1; min-width: 0; display: flex; flex-direction: column; padding: 0 6px; }
.paneltools { flex: none; height: 37px; display: flex; align-items: center; gap: 4px; }
.paneltools p { flex: 1; line-height: 15px; padding-left: 8px; }
.paneltools .play { margin-right: 5px; }
.tree { flex: 1; min-height: 0; margin: 0; padding: 0; list-style: none; border: 1px solid #000; background: #fff; overflow: hidden; }
.tree li { height: 18px; display: flex; align-items: center; white-space: nowrap; }
.pg { background: #e0efff; border-bottom: 1px solid #c3c3c3; font-weight: bold; padding-left: 6px; }
.pg.second { border-top: 1px solid #c3c3c3; }
.pg .s { margin: 0 5px 0 9px; }
.ly { padding-left: 44px; gap: 4px; }
.ly.line { border-bottom: 1px solid #c3c3c3; }
.ly.kids { padding-left: 25px; }
.kids .exp { margin-right: 6px; }
.kids b { color: #f00018; }
.ly em, .ly b { margin-left: 3px; }
.sky em { color: #00a2f0; }
.exp { flex: none; width: 9px; height: 9px; border: 1px solid #888; background: linear-gradient(#333, #333) center / 5px 1px no-repeat; }
.s { width: 12px; height: 12px; stroke-width: 1; }
.e { width: 12px; height: 10px; stroke-width: 1; }
.l { width: 10px; height: 13px; stroke: #000; }
.sw { flex: none; width: 16px; height: 13px; }
.blue { background: #00f; }
.black { background: #141716; }
.gray { background: #c1c1c1; }
.ob { padding-left: 62px; gap: 5px; }
.ob .c { width: 12px; height: 12px; stroke-width: 1.5; }
.ob span { width: 48px; height: 18px; line-height: 18px; background: #00a9ff; color: #fff; }
.panelfoot { flex: none; height: 35px; display: flex; align-items: center; gap: 4px; }
.trash { margin-left: auto; margin-right: 5px; }
.strip { flex: none; width: 17px; border-left: 1px solid #00a4f4; background: #e9e9e9; overflow: hidden; }
.sidetab { width: 100%; height: 150px; background: #cde1ff; display: flex; flex-direction: column; align-items: center; padding-top: 4px; }
.sidetab .i { width: 14px; height: 14px; }
.sidetab span { writing-mode: vertical-rl; line-height: 16px; padding-top: 5px; white-space: nowrap; font-size: 11px; }
.strip .add { margin-top: 14px; margin-left: -2px; }
.arrow { position: absolute; left: -103px; top: 197px; width: 150px; height: 92px; }

.status { flex: none; height: 10px; border-top: 1px solid #d7d7d7; display: flex; align-items: flex-end; padding-left: 961px; }
.chip { width: 22px; height: 2px; background: #fff; border-top: 1px solid #777; }
.chip.ink { background: #111; margin-left: 28px; }
.rule { width: 1px; height: 2px; background: #ccc; margin-left: 156px; }
```
